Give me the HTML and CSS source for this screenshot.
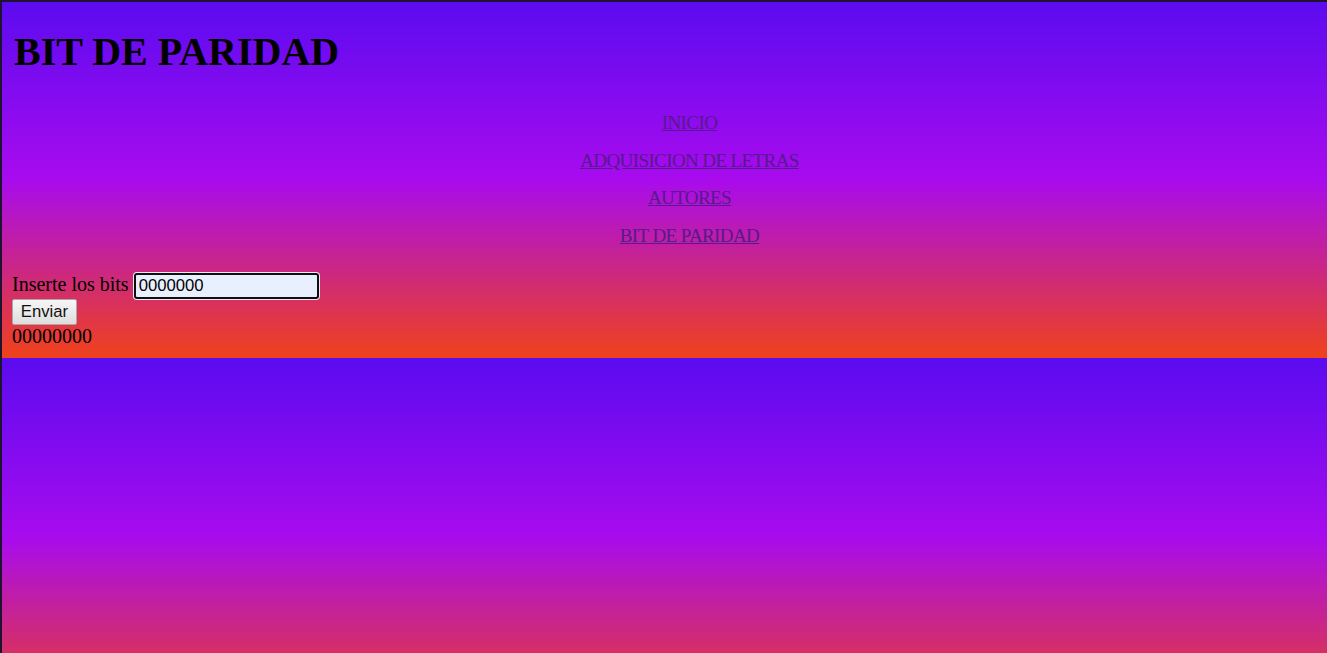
FILE: index.html
```html
<!DOCTYPE html>
<html lang="es">
<head>
<meta charset="utf-8">
<title>Bit de paridad</title>
<link rel="stylesheet" href="styles.css">
</head>
<body>
<div class="frame"></div>
<h1 class="title">BIT DE PARIDAD</h1>
<ul class="nav">
  <li><a href="#" class="nav-link">INICIO</a></li>
  <li><a href="#" class="nav-link">ADQUISICION DE LETRAS</a></li>
  <li><a href="#" class="nav-link">AUTORES</a></li>
  <li><a href="#" class="nav-link">BIT DE PARIDAD</a></li>
</ul>
<form class="form">
  <div class="row"><label class="label" for="bits">Inserte los bits</label> <input class="bits" id="bits" type="text" value="0000000"></div>
  <div class="row"><button class="send" type="button">Enviar</button></div>
  <div class="result">00000000</div>
</form>
</body>
</html>
```
FILE: styles.css
```css
html {
  padding: 2px 0 0 2px;
  background: linear-gradient(#5b0bf0 0%, #a80bee 50%, #d22c70 80%, #f0421a 100%);
}
body {
  margin: 0 10px 10px;
  font-family: "Liberation Serif", "Times New Roman", serif;
  font-size: 20px;
  color: #000;
}
.frame {
  position: fixed;
  left: 0;
  top: 0;
  right: 0;
  bottom: 0;
  border-left: 2px solid #1e1432;
  border-top: 2px solid #1e1432;
  pointer-events: none;
}
.title {
  font-size: 40px;
  font-weight: bold;
  margin: 26.8px 0 26.8px;
  padding-left: 2px;
  line-height: 46px;
}
.nav {
  list-style: none;
  margin: 29.5px 0 18.4px;
  padding: 0 0 0 50px;
  text-align: center;
}
.nav li {
  line-height: 37.5px;
  font-size: 19px;
}
.nav-link {
  color: #551a8b;
  letter-spacing: -0.6px;
  text-decoration: underline;
}
.form {
  margin: 0;
}
.row {
  line-height: 23px;
}
.label {
  font-size: 20px;
}
.bits {
  box-sizing: border-box;
  width: 185px;
  height: 26.5px;
  margin: 0;
  padding: 1px 3px;
  border: 2px solid #101010;
  border-radius: 3px;
  background: #e8f0fe;
  box-shadow: 0 0 0 1px #f4eef4;
  font-family: "Liberation Sans", Arial, sans-serif;
  font-size: 16.7px;
  color: #000;
  outline: none;
  vertical-align: baseline;
}
.send {
  box-sizing: border-box;
  width: 65px;
  height: 26px;
  margin: 0;
  padding: 0 6px;
  border: 1px solid #a8a8a8;
  border-radius: 2px;
  background: linear-gradient(#f6f6f6, #dedede);
  font-family: "Liberation Sans", Arial, sans-serif;
  font-size: 16.7px;
  color: #111;
  vertical-align: top;
}
.result {
  line-height: 23px;
}
```
